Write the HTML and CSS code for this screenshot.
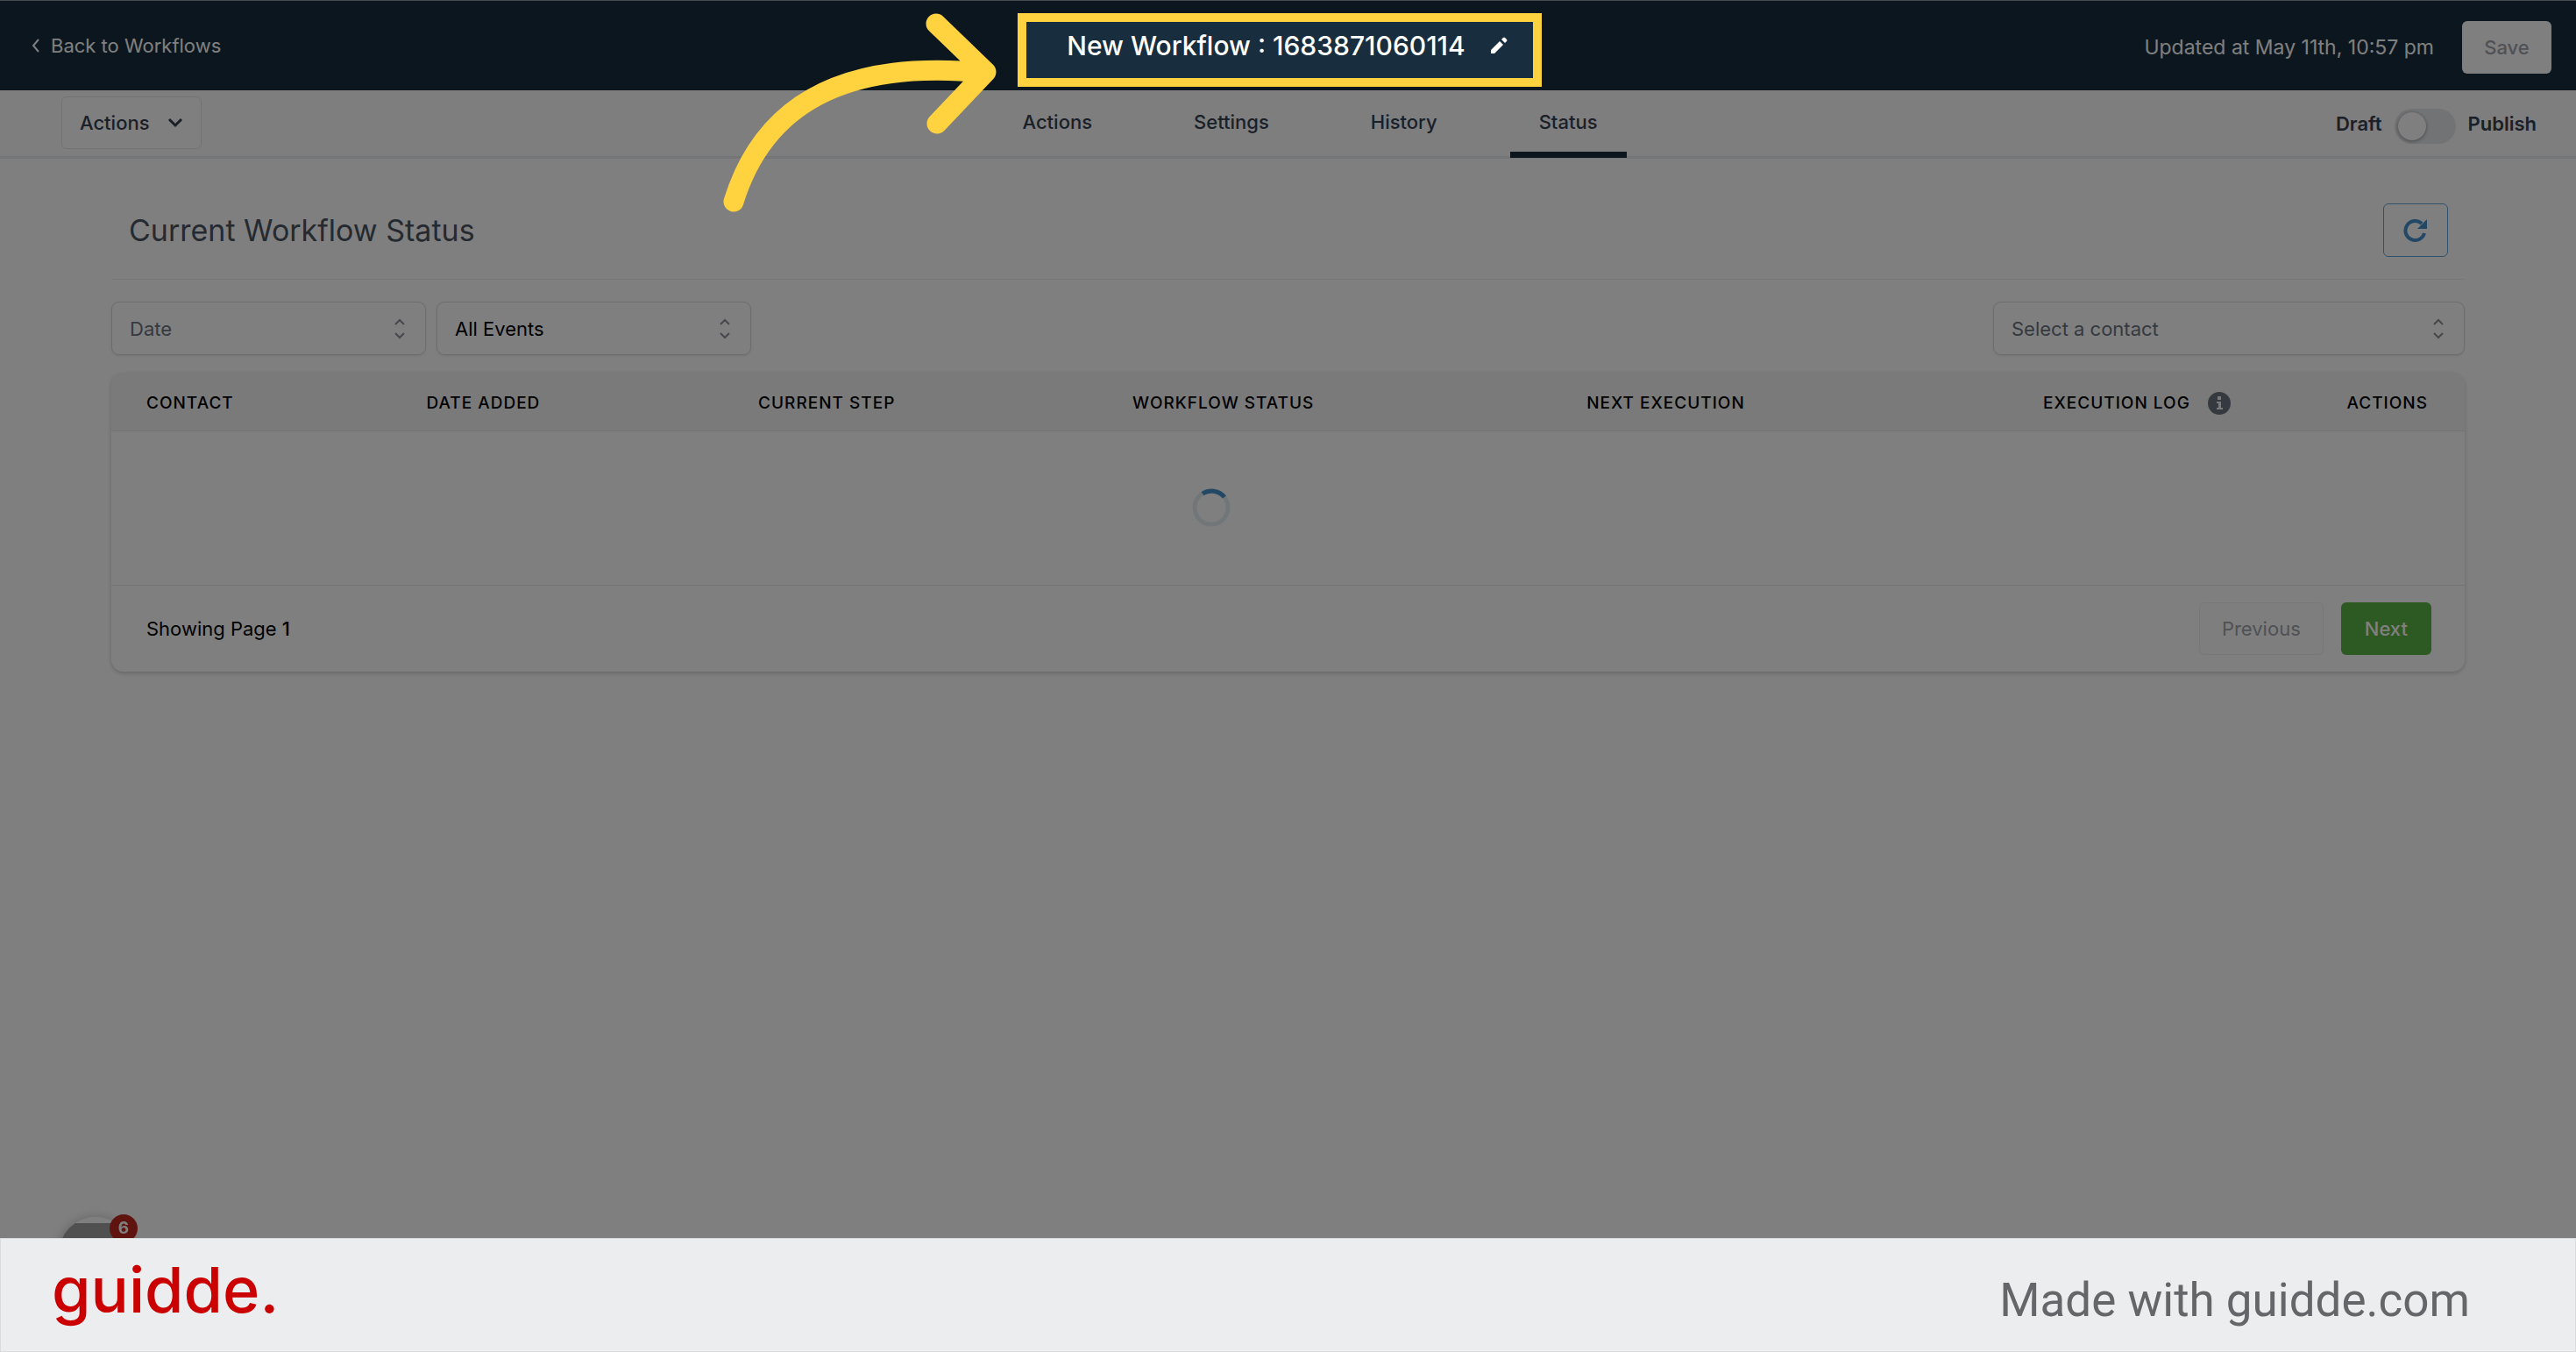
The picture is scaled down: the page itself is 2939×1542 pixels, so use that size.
FILE: index.html
```html
<!DOCTYPE html>
<html lang="en">
<head>
    <meta charset="UTF-8">
    <meta name="viewport" content="width=device-width, initial-scale=1.0">
    <title>New Workflow - Status</title>
    <link rel="stylesheet" href="styles.css">
</head>
<body>
    <!-- Top Header -->
    <header class="header">
        <a class="back-link" href="#">
            <svg class="back-icon" viewBox="0 0 10 18"><path d="M8 2 L2 9 L8 16"/></svg>
            Back to Workflows
        </a>
        <div class="title">
            <h1>New Workflow : 1683871060114</h1>
            <button class="edit-button" aria-label="Rename workflow">
                <svg viewBox="0 0 20 20"><path d="M1 19 V15 L11 5 L15 9 L5 19 Z M13 3 L15 1 Q16 0 17 1 L19 3 Q20 4 19 5 L17 7 Z"/></svg>
            </button>
            <div class="highlight"></div>
        </div>
        <div class="header-right">
            <span class="updated">Updated at May 11th, 10:57 pm</span>
            <button class="save-button">Save</button>
        </div>
    </header>

    <!-- Tabs Bar -->
    <div class="toolbar">
        <div class="toolbar-left">
            <button class="actions-menu">
                Actions
                <svg viewBox="0 0 18 12"><path d="M2 2 L9 9 L16 2"/></svg>
            </button>
        </div>
        <nav class="tabs">
            <a href="#">Actions</a>
            <a href="#">Settings</a>
            <a href="#">History</a>
            <a href="#" class="active">Status</a>
        </nav>
        <div class="publish">
            <label for="publishToggle">Draft</label>
            <input type="checkbox" id="publishToggle" class="toggle">
            <label for="publishToggle">Publish</label>
        </div>
    </div>

    <!-- Main Content -->
    <main class="main-content">
        <div class="page-title">
            <h2>Current Workflow Status</h2>
            <button class="refresh-button" aria-label="Refresh">
                <svg viewBox="0 0 28 28"><path class="arc" d="M24 17 A11 11 0 1 1 21 6"/><path class="head" d="M27 1 V12 H16 Z"/></svg>
            </button>
        </div>

        <!-- Filters -->
        <div class="filters">
            <div class="select-box placeholder">
                <select aria-label="Date"><option>Date</option></select>
                <svg viewBox="0 0 14 24"><path d="M2 7 L7 2 L12 7 M2 17 L7 22 L12 17"/></svg>
            </div>
            <div class="select-box">
                <select aria-label="Events"><option>All Events</option></select>
                <svg viewBox="0 0 14 24"><path d="M2 7 L7 2 L12 7 M2 17 L7 22 L12 17"/></svg>
            </div>
            <div class="select-box contact placeholder">
                <select aria-label="Contact"><option>Select a contact</option></select>
                <svg viewBox="0 0 14 24"><path d="M2 7 L7 2 L12 7 M2 17 L7 22 L12 17"/></svg>
            </div>
        </div>

        <!-- Status Table -->
        <div class="card">
            <table>
                <colgroup>
                    <col class="col-contact">
                    <col class="col-date">
                    <col class="col-step">
                    <col class="col-status">
                    <col class="col-next">
                    <col class="col-log">
                    <col class="col-actions">
                </colgroup>
                <thead>
                    <tr>
                        <th>Contact</th>
                        <th>Date Added</th>
                        <th>Current Step</th>
                        <th>Workflow Status</th>
                        <th>Next Execution</th>
                        <th>
                            <div class="with-icon">
                                Execution Log
                                <svg viewBox="0 0 26 26"><circle cx="13" cy="13" r="13"/><path d="M11 5 H15 V9 H11 Z M10 11 H15 V18 H17 V20 H10 V18 H12 V13 H10 Z"/></svg>
                            </div>
                        </th>
                        <th>Actions</th>
                    </tr>
                </thead>
                <tbody>
                    <tr>
                        <td colspan="3"></td>
                        <td>
                            <svg class="spinner" viewBox="0 0 44 44"><circle cx="22" cy="22" r="19"/><path d="M12 6 A19 19 0 0 1 37 10"/></svg>
                        </td>
                        <td colspan="3"></td>
                    </tr>
                </tbody>
            </table>
            <div class="pagination">
                <span>Showing Page <b>1</b></span>
                <div class="page-buttons">
                    <button class="previous">Previous</button>
                    <button class="next">Next</button>
                </div>
            </div>
        </div>
    </main>

    <!-- Chat Launcher -->
    <div class="chat">
        <div class="chat-bubble"></div>
        <span class="chat-badge">6</span>
    </div>

    <!-- Pointer -->
    <svg class="pointer" viewBox="0 0 320 250">
        <path d="M12 230 C46 120 136 67 298 83 M243 27 L300 82 L244 141"/>
    </svg>

    <!-- Footer -->
    <footer class="footer">
        <span class="logo">guidde.</span>
        <span class="made-with">Made with guidde.com</span>
    </footer>
</body>
</html>
```

FILE: styles.css
```css
/* General Styling */
* {
    box-sizing: border-box;
}

body {
    font-family: Inter, "Liberation Sans", sans-serif;
    font-size: 22px;
    line-height: 28px;
    background-color: #ffffff;
    color: #000;
    margin: 0;
    min-height: 100vh;
    display: flex;
    flex-direction: column;
}

button, select {
    font-family: inherit;
    font-size: inherit;
    line-height: inherit;
}

a {
    text-decoration: none;
}

svg {
    fill: none;
    stroke: currentColor;
}

/* Header */
.header {
    height: 103px;
    background-color: #182d3d;
    border-top: 1px solid #8f9ca3;
    display: grid;
    grid-template-columns: 1fr auto 1fr;
    align-items: center;
    padding: 0 28px 0 26px;
    color: #fff;
}

.back-link {
    display: flex;
    align-items: center;
    gap: 12px;
    padding-left: 10px;
    color: #fff;
}

.back-icon {
    width: 10px;
    height: 18px;
    stroke-width: 2;
}

.title {
    position: relative;
    display: flex;
    align-items: center;
    gap: 28px;
}

.title h1 {
    margin: 0;
    font-size: 30px;
    line-height: 40px;
    font-weight: 500;
}

.edit-button {
    background: none;
    border: none;
    padding: 0;
    color: #fff;
    display: flex;
}

.edit-button svg {
    width: 20px;
    height: 20px;
    fill: currentColor;
    stroke: none;
}

/* Spotlight frame, its shadow dims the rest of the page */
.highlight {
    position: absolute;
    top: -17px;
    bottom: -27px;
    left: -56px;
    right: -39px;
    border: 10px solid #ffd23f;
    box-shadow: 0 0 0 4000px rgba(0, 0, 0, 0.5);
    z-index: 10;
    pointer-events: none;
}

.header-right {
    display: flex;
    align-items: center;
    justify-content: flex-end;
    gap: 32px;
    padding-top: 4px;
}

.updated {
    font-size: 23px;
}

.save-button {
    width: 102px;
    height: 60px;
    border: none;
    border-radius: 6px;
    background-color: #fff;
    color: #a0a3ab;
    font-weight: 500;
}

/* Tabs Bar */
.toolbar {
    height: 78px;
    background-color: #fcfcfc;
    border-bottom: 3px solid #e6eaee;
    display: grid;
    grid-template-columns: 1fr auto 1fr;
    padding: 0 45px;
    color: #374151;
}

.toolbar-left {
    padding: 7px 0 0 25px;
}

.actions-menu {
    height: 60px;
    padding: 0 20px;
    display: flex;
    align-items: center;
    gap: 20px;
    background-color: #fff;
    border: 1px solid #e2e4e8;
    border-radius: 6px;
    color: #374151;
    font-weight: 500;
}

.actions-menu svg {
    width: 18px;
    height: 12px;
    stroke-width: 3;
}

.tabs {
    display: flex;
}

.tabs a {
    height: 77px;
    margin-left: 50px;
    padding: 22px 33px 0;
    color: #374151;
    font-weight: 500;
    border-bottom: 7px solid transparent;
}

.tabs a.active {
    border-bottom-color: #182d3d;
}

.publish {
    display: flex;
    align-items: center;
    justify-content: flex-end;
    gap: 14px;
    font-weight: 600;
}

.publish label {
    padding-bottom: 2px;
}

.toggle {
    appearance: none;
    width: 70px;
    height: 40px;
    margin: 4px 0 0;
    padding: 4px;
    border-radius: 20px;
    background-color: #e5e7eb;
}

.toggle::before {
    content: "";
    display: block;
    width: 32px;
    height: 32px;
    border-radius: 50%;
    background-color: #fff;
    box-shadow: 0 1px 4px rgba(0, 0, 0, 0.4);
}

/* Main Content Area */
.main-content {
    padding: 0 127px;
    flex: 1;
}

.page-title {
    height: 138px;
    padding: 26px 19px 0 20px;
    display: flex;
    justify-content: space-between;
    align-items: center;
    border-bottom: 1px solid #eeeeee;
}

.page-title h2 {
    margin: 0;
    font-size: 34px;
    line-height: 48px;
    font-weight: 400;
    color: #4b5563;
}

.refresh-button {
    width: 74px;
    height: 61px;
    border: 1px solid #5fa3d8;
    border-radius: 6px;
    background-color: #fff;
    color: #4590cc;
    display: flex;
    align-items: center;
    justify-content: center;
}

.refresh-button svg {
    width: 28px;
    height: 28px;
}

.refresh-button .arc {
    stroke-width: 4;
}

.refresh-button .head {
    fill: currentColor;
    stroke: none;
}

/* Filters */
.filters {
    display: flex;
    gap: 12px;
    padding: 25px 0 20px;
}

.select-box {
    position: relative;
    width: 359px;
}

.select-box.contact {
    width: 538px;
    margin-left: auto;
}

.select-box select {
    appearance: none;
    width: 100%;
    height: 61px;
    padding: 0 20px;
    border: 1px solid #d8dadd;
    border-radius: 9px;
    background-color: #fff;
    color: #000;
    box-shadow: 0 1px 3px rgba(0, 0, 0, 0.1);
}

.select-box.placeholder select {
    color: #6b7280;
}

.select-box svg {
    position: absolute;
    right: 23px;
    top: 19px;
    width: 14px;
    height: 24px;
    stroke-width: 2;
    color: #8b9099;
    pointer-events: none;
}

/* Status Table */
.card {
    border-radius: 14px;
    box-shadow: 0 2px 5px rgba(0, 0, 0, 0.2);
    overflow: hidden;
}

table {
    width: 100%;
    border-collapse: collapse;
    table-layout: fixed;
}

.col-contact { width: 11.9%; }
.col-date { width: 14.1%; }
.col-step { width: 15.9%; }
.col-status { width: 19.3%; }
.col-next { width: 19.4%; }
.col-log { width: 12.9%; }

th {
    height: 66px;
    padding: 5px 0 0 40px;
    background-color: #f4f4f4;
    border-bottom: 1px solid #e8e8e8;
    font-size: 19px;
    font-weight: 500;
    letter-spacing: 1px;
    text-align: left;
    text-transform: uppercase;
}

td {
    height: 176px;
    padding: 0;
    border-bottom: 1px solid #e8e8e8;
}

.with-icon {
    display: flex;
    align-items: center;
    gap: 20px;
}

.with-icon svg {
    width: 26px;
    height: 26px;
    stroke: none;
}

.with-icon circle {
    fill: #6b7280;
}

.with-icon path {
    fill: #f4f4f4;
}

.spinner {
    display: block;
    width: 44px;
    height: 44px;
    margin-left: 108px;
    stroke-width: 5;
}

.spinner circle {
    stroke: #e3eef3;
}

.spinner path {
    stroke: #4590cc;
}

.pagination {
    display: flex;
    align-items: center;
    justify-content: space-between;
    height: 98px;
    padding: 0 38px 0 40px;
}

.pagination b {
    font-weight: 500;
}

.page-buttons {
    display: flex;
    gap: 20px;
}

.page-buttons button {
    height: 60px;
    padding: 0 27px;
    border-radius: 6px;
    font-weight: 500;
}

.page-buttons .previous {
    padding: 0 25px;
    background-color: #fdfdfd;
    border: 1px solid #eceef0;
    color: #a0a3ab;
    font-weight: 400;
}

.page-buttons .next {
    background-color: #5ab347;
    border: none;
    color: #fff;
}

/* Chat Launcher */
.chat {
    position: fixed;
    left: 67px;
    bottom: 70px;
    width: 84px;
    height: 84px;
}

.chat-bubble {
    height: 84px;
    border-radius: 50%;
    background: linear-gradient(#fff 7px, #a0a0a0 7px);
    box-shadow: 0 2px 14px rgba(0, 0, 0, 0.3);
}

.chat-badge {
    position: absolute;
    top: -3px;
    right: -6px;
    width: 32px;
    height: 32px;
    border-radius: 50%;
    background-color: #c0281f;
    color: #fff;
    font-size: 19px;
    line-height: 32px;
    font-weight: 700;
    text-align: center;
}

/* Pointer */
.pointer {
    position: absolute;
    top: 0;
    left: 825px;
    width: 320px;
    height: 250px;
    stroke: #ffd23f;
    stroke-width: 23;
    stroke-linecap: round;
    stroke-linejoin: round;
    z-index: 20;
}

/* Footer */
.footer {
    position: relative;
    z-index: 20;
    height: 130px;
    padding: 0 120px 0 58px;
    display: flex;
    align-items: center;
    justify-content: space-between;
    background-color: #ecedef;
    border: 1px solid #d9dbdd;
}

.logo {
    padding-bottom: 12px;
    font-size: 72px;
    line-height: 88px;
    font-weight: 500;
    color: #cb0000;
}

.made-with {
    padding-top: 12px;
    font-family: Roboto, sans-serif;
    font-size: 53px;
    line-height: 64px;
    color: #646669;
}
```
